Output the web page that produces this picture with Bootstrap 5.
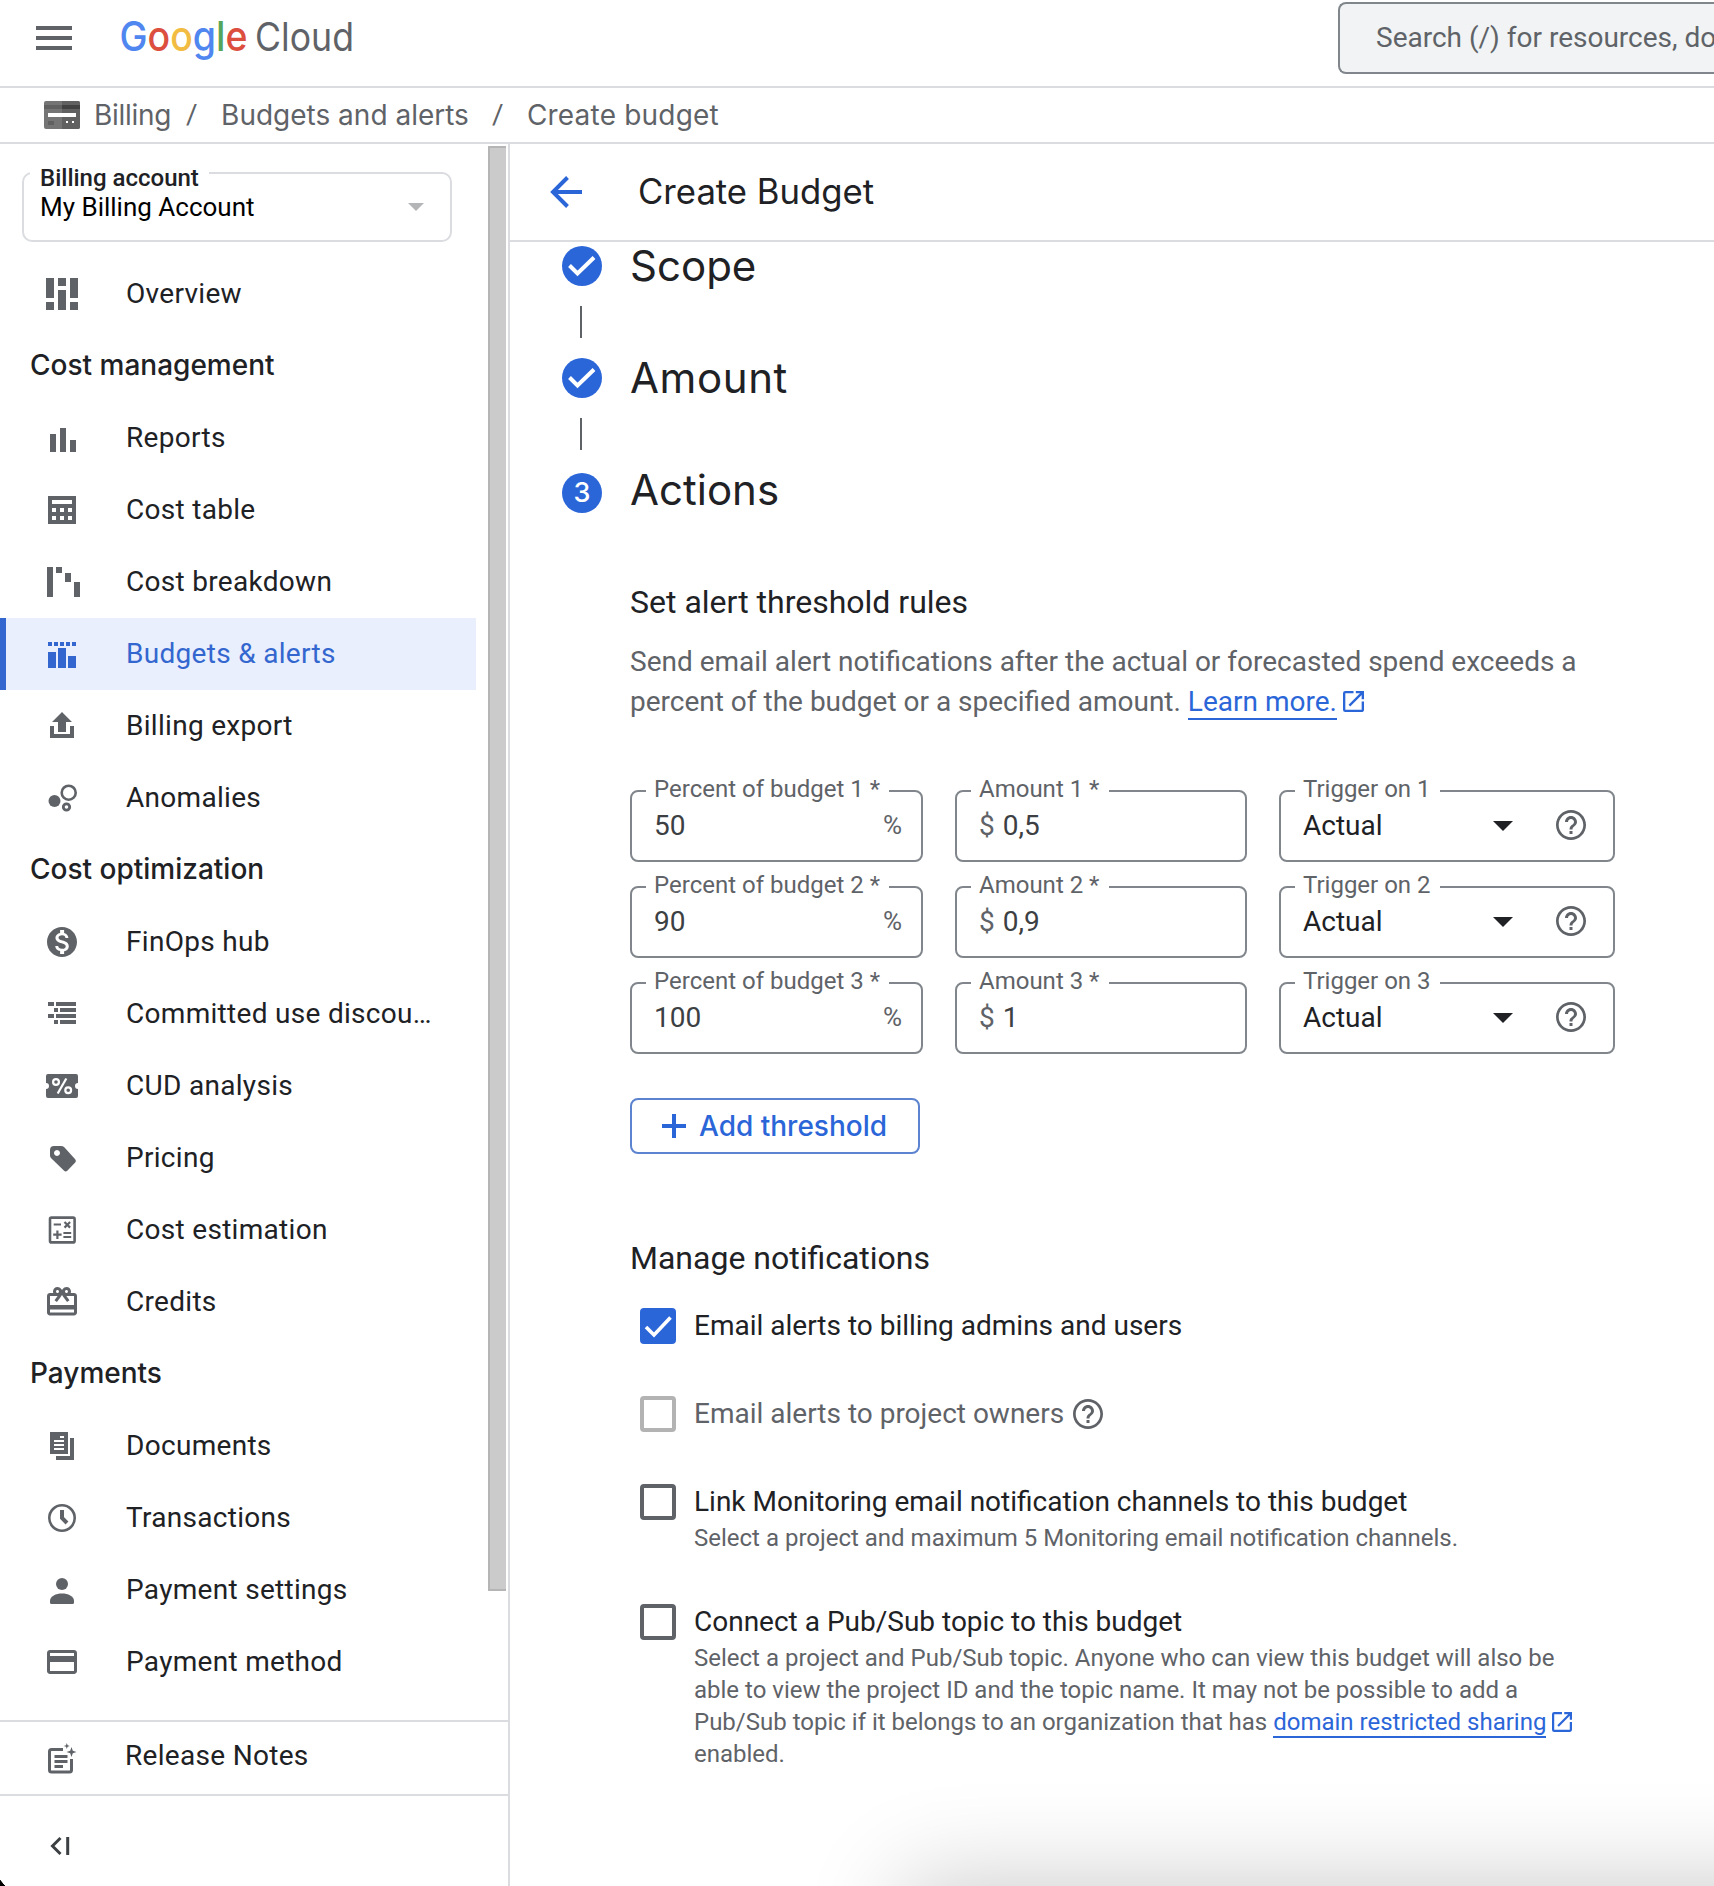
<!DOCTYPE html>
<html lang="en">
<head>
<meta charset="utf-8">
<meta name="viewport" content="width=device-width, initial-scale=1">
<title>Create Budget – Billing – Google Cloud</title>
<link href="https://cdn.jsdelivr.net/npm/bootstrap@5.3.0/dist/css/bootstrap.min.css" rel="stylesheet">
<script src="https://cdn.jsdelivr.net/npm/bootstrap@5.3.0/dist/js/bootstrap.bundle.min.js"></script>
<style>
  :root { --ink:#202124; --soft:#5f6368; --line:#dadce0; --blue:#2b66d9; --outline:#80868b; }
  body { font-family:Roboto, "Liberation Sans", sans-serif; font-size:28px; line-height:40px; color:var(--ink); background:#fff; }
  svg { display:block; flex:none; }
  .app-shell { width:1714px; height:1886px; }
  .g-sans { font-family:Inter, Roboto, sans-serif; }

  /* header */
  .top-bar { height:88px; border-bottom:2px solid var(--line); padding-left:36px; }
  .menu-icon { margin-top:20px; }
  .brand-logo { margin:11px 0 0 40px; }
  .search-box { width:376px; height:72px; margin-top:2px; padding-left:36px; background:#f1f3f4; border:2px solid var(--outline); border-right:0; border-radius:8px 0 0 8px; color:var(--soft); line-height:68px; }
  .crumb-bar { height:56px; border-bottom:2px solid var(--line); padding:0 0 1px 44px; color:var(--soft); }
  .crumb-bar .first-crumb { margin-left:14px; letter-spacing:-.3px; }
  .crumb-bar .slash { width:50px; padding-left:15px; font-family:Roboto; }
  .crumb-bar .slash-b { width:58px; padding-left:23px; font-family:Roboto; }
  .crumb-bar .last-crumb { letter-spacing:.2px; }

  /* sidebar */
  .side-col { width:510px; border-right:2px solid var(--line); }
  .side-scroll { height:1576px; padding:28px 0 0; }
  .acct-box { width:430px; height:70px; margin:0 0 16px 22px; border:2px solid var(--line); border-radius:10px; padding:13px 26px 0 16px; color:#000; font-size:26px; }
  .float-label { position:absolute; background:#fff; white-space:nowrap; }
  .acct-box .float-label { left:6px; top:-12px; padding:0 10px; height:32px; line-height:32px; font-size:24px; font-weight:500; color:var(--ink); background:linear-gradient(#fff 50%, transparent 50%); }
  .scroll-thumb { position:absolute; right:2px; top:2px; width:18px; height:1445px; background:#cbcbcb; border:2px solid #b5b5b5; border-right:0; }
  .nav-row { height:72px; width:476px; padding:0 40px 0 44px; gap:46px; color:var(--ink); letter-spacing:.3px; text-decoration:none; }
  .nav-row.is-active { background:#e9effd; color:#3367cf; border-left:6px solid #3367cf; padding-left:38px; }
  .nav-row svg { color:var(--soft); }
  .nav-row.is-active svg { color:#3367cf; }
  .nav-head { height:72px; padding:0 0 2px 30px; font-weight:500; }
  .release-row { height:74px; width:508px; border-top:2px solid var(--line); padding-bottom:5px; gap:45px; }
  .release-row svg { margin-top:9px; }
  .collapse-row { border-top:2px solid var(--line); padding:40px 0 0 48px; height:92px; }

  /* main */
  .title-bar { height:98px; border-bottom:2px solid var(--line); padding-left:37px; font-size:34.7px; }
  .title-bar span { margin-left:55px; margin-top:-2px; }
  .page-body { padding:4px 0 0 52px; }
  .step-row { height:40px; gap:28px; }
  .step-row h2 { font-size:42px; line-height:44px; margin:-2px 0 0; font-weight:400; }
  .step-row .wide { letter-spacing:.6px; }
  .step-dot { width:40px; height:40px; border-radius:50%; background:var(--blue); color:#fff; font-size:27px; font-weight:500; }
  .step-link { width:2px; height:32px; margin:20px 0 20px 18px; background:var(--soft); }
  .step-body { padding:72px 0 0 68px; }
  .step-body h3 { font-size:32px; line-height:40px; margin:0; font-weight:400; }
  .help-copy { color:var(--soft); width:980px; height:80px; margin:20px 0 68px; }
  .doc-link { color:var(--blue); text-decoration:none; border-bottom:2px solid var(--blue); }
  .help-copy .doc-link { display:inline-block; line-height:33px; }
  .ext-icon { display:inline-block; vertical-align:-1px; margin-left:-1px; color:var(--blue); }

  .rule-grid { gap:24px; }
  .rule-row { gap:32px; }
  .out-field { height:72px; width:292px; border:2px solid var(--outline); border-radius:8px; padding:14px 18px 0 22px; color:#3c4043; line-height:40px; }
  .out-field.pct { width:293px; padding-right:19px; }
  .out-field.trig { width:336px; color:var(--ink); padding-right:27px; }
  .out-field .float-label { left:14px; top:-19px; padding:0 9px 0 8px; height:32px; line-height:32px; font-size:24px; color:var(--soft); }
  .amt .float-label { padding-right:10px; }
  .amt .unit { margin-right:1px; }
  .out-field .unit { color:var(--soft); }
  .out-field .unit-pct { font-size:26px; line-height:38px; }
  .rule-row svg { margin-top:4px; }
  .rule-row .drop-tri { margin:15px 43px 0 0; }
  .add-btn { width:290px; height:56px; margin:44px 0 84px; border:2px solid #5c83cf; border-radius:8px; color:var(--blue); font-weight:500; font-size:28px; line-height:40px; padding:0 0 0 28px; gap:11px; }

  .check-item { gap:18px; margin-left:10px; line-height:36px; }
  .check-square { width:36px; height:36px; border:4px solid var(--soft); border-radius:4px; flex:none; }
  .check-square.is-on { background:var(--blue); border:0; }
  .check-square.is-off { border-color:#b3b3b4; }
  .check-note { font-size:24px; line-height:32px; color:var(--soft); margin-top:2px; width:890px; }
  .check-note .doc-link { display:inline-block; line-height:27px; }
  .check-note .ext-icon { vertical-align:-2px; margin-left:0; }

  /* edges of the window behind */
  .edge-shadow { position:absolute; left:912px; top:1890px; width:1400px; height:300px; box-shadow:0 0 92px 10px rgba(0,0,0,.2); }
  .edge-corner { position:absolute; left:0; bottom:0; width:5px; height:6px; background:linear-gradient(to top right, #000 50%, transparent 56%); }
</style>
</head>
<body class="overflow-hidden">
<svg width="0" height="0" class="position-absolute">
  <symbol id="i-help" viewBox="2 2 20 20"><path fill="currentColor" d="M11 18h2v-2h-2v2zm1-16C6.480 2 2 6.480 2 12s4.480 10 10 10 10-4.480 10-10S17.520 2 12 2zm0 18.200c-4.500 0-8.200-3.700-8.200-8.200S7.500 3.800 12 3.800s8.200 3.700 8.200 8.200-3.700 8.200-8.200 8.200zM12 6c-2.210 0-4 1.790-4 4h2c0-1.100.9-2 2-2s2 .9 2 2c0 2-3 1.750-3 5h2c0-2.250 3-2.500 3-5 0-2.210-1.790-4-4-4z"/></symbol>
  <symbol id="i-ext" viewBox="3 3 18 18"><path fill="currentColor" d="M19 19H5V5h7V3H5a2 2 0 0 0-2 2v14a2 2 0 0 0 2 2h14c1.100 0 2-.9 2-2v-7h-2v7zM14 3v2h3.590l-9.830 9.830 1.410 1.410L19 6.410V10h2V3h-7z"/></symbol>
  <symbol id="i-check" viewBox="0 0 40 40"><path fill="none" stroke="currentColor" stroke-width="4" d="M7.500 19.500 15.500 27.500 32 11.500"/></symbol>
</svg>

<div class="app-shell position-relative overflow-hidden d-flex flex-column">
  <header class="top-bar d-flex align-items-start flex-shrink-0">
    <svg class="menu-icon" width="36" height="36" viewBox="0 0 36 36" fill="#5f6368"><path d="M0 6h36v4H0zM0 16h36v4H0zM0 26h36v4H0z"/></svg>
    <svg class="brand-logo" width="320" height="64" viewBox="0 0 320 64" font-family="Inter, Roboto, sans-serif">
      <text x="7.500" y="39.500" font-size="41" font-weight="500" textLength="128" lengthAdjust="spacingAndGlyphs"><tspan fill="#4f86ef">G</tspan><tspan fill="#dc4f3f">o</tspan><tspan fill="#f2bc42">o</tspan><tspan fill="#4f86ef">g</tspan><tspan fill="#55a55c">l</tspan><tspan fill="#dc4f3f">e</tspan></text>
      <text x="143" y="39.500" font-size="39" fill="#5f6368" textLength="99" lengthAdjust="spacingAndGlyphs">Cloud</text>
    </svg>
    <div class="search-box ms-auto overflow-hidden text-nowrap">Search (/) for resources, docs, products, and more</div>
  </header>

  <nav class="crumb-bar g-sans d-flex align-items-center flex-shrink-0">
    <svg width="36" height="28" viewBox="0 0 36 28"><rect width="36" height="28" rx="2" fill="#757575"/><path d="M18 0h16a2 2 0 0 1 2 2v24a2 2 0 0 1-2 2H18z" fill="#616161"/><path d="M0 4h18v4H0z" fill="#616161"/><path d="M18 4h18v4H18z" fill="#424242"/><path d="M4 12h28v4H4zM22 20h2v2h-2zM28 20h2v2h-2z" fill="#fff"/><path d="M4 20h6v4H4z" fill="#616161"/></svg>
    <span class="first-crumb">Billing</span><span class="slash">/</span><span>Budgets and alerts</span><span class="slash-b">/</span><span class="last-crumb">Create budget</span>
  </nav>

  <div class="d-flex flex-grow-1">
    <aside class="side-col flex-shrink-0 position-relative">
      <div class="side-scroll">
        <div class="acct-box position-relative d-flex justify-content-between align-items-start">
          <span class="float-label">Billing account</span>
          <span>My Billing Account</span>
          <svg class="mt-3" width="16" height="8" viewBox="0 0 16 8"><path d="M0 0h16L8 8z" fill="#b4b5b7"/></svg>
        </div>
        <a class="nav-row d-flex align-items-center"><svg width="36" height="36" fill="currentColor"><path d="M2 2h8v20H2zM2 26h8v8H2zM14 2h8v8h-8zM14 14h8v20h-8zM26 2h8v20h-8zM26 26h8v8h-8z"/></svg><span>Overview</span></a>
        <div class="nav-head g-sans d-flex align-items-center">Cost management</div>
        <a class="nav-row d-flex align-items-center"><svg width="36" height="36" fill="currentColor"><path d="M6 14h6v18H6zM16 8h6v24h-6zM26 20h6v12h-6z"/></svg><span>Reports</span></a>
        <a class="nav-row d-flex align-items-center"><svg width="36" height="36" fill="currentColor"><path fill-rule="evenodd" d="M4 4h28v28H4zM8 8v4h20V8zM8 16v4h4v-4zM16 16v4h4v-4zM24 16v4h4v-4zM8 24v4h4v-4zM16 24v4h4v-4zM24 24v4h4v-4z"/></svg><span>Cost table</span></a>
        <a class="nav-row d-flex align-items-center"><svg width="36" height="36" fill="currentColor"><path d="M3 3h6v30H3zM12 3h6v6h-6zM21 9h6v9h-6zM30 18h6v15h-6z"/></svg><span>Cost breakdown</span></a>
        <a class="nav-row is-active d-flex align-items-center"><svg width="36" height="36" fill="currentColor"><path d="M4 6h4v4H4zM10 6h4v4h-4zM16 6h4v4h-4zM22 6h4v4h-4zM28 6h4v4h-4zM4 16h8v16H4zM14 12h8v20h-8zM24 20h8v12h-8z"/></svg><span>Budgets &amp; alerts</span></a>
        <a class="nav-row d-flex align-items-center"><svg width="36" height="36" fill="currentColor"><path d="M18 4 28 14h-6v10h-8V14H8zM6 18h4v8h16v-8h4v12H6z"/></svg><span>Billing export</span></a>
        <a class="nav-row d-flex align-items-center"><svg width="36" height="36" fill="currentColor"><circle cx="10.500" cy="21" r="6"/><circle cx="24.700" cy="12.700" r="7" fill="none" stroke="currentColor" stroke-width="2.600"/><circle cx="22.500" cy="27" r="3.200" fill="none" stroke="currentColor" stroke-width="2.800"/></svg><span>Anomalies</span></a>
        <div class="nav-head g-sans d-flex align-items-center">Cost optimization</div>
        <a class="nav-row d-flex align-items-center"><svg width="36" height="36" viewBox="0 0 24 24" fill="currentColor"><path d="M12 2C6.480 2 2 6.480 2 12s4.480 10 10 10 10-4.480 10-10S17.520 2 12 2zm1.410 16.090V20h-2.670v-1.930c-1.710-.36-3.160-1.460-3.270-3.400h1.960c.1 1.050.82 1.870 2.650 1.870 1.960 0 2.400-.98 2.400-1.590 0-.83-.44-1.610-2.670-2.140-2.480-.6-4.180-1.620-4.180-3.670 0-1.720 1.390-2.840 3.110-3.210V4h2.670v1.950c1.860.45 2.790 1.860 2.850 3.390H14.300c-.05-1.110-.64-1.870-2.220-1.870-1.500 0-2.400.68-2.400 1.640 0 .84.65 1.390 2.670 1.910s4.180 1.390 4.180 3.910c-.02 1.830-1.380 2.830-3.120 3.160z"/></svg><span>FinOps hub</span></a>
        <a class="nav-row d-flex align-items-center"><svg width="36" height="36" fill="currentColor"><path d="M4 6h6v4H4zM12 6h20v4H12zM10 12h4v4h-4zM16 12h16v4H16zM4 18h6v4H4zM12 18h20v4H12zM10 24h4v4h-4zM16 24h16v4H16z"/></svg><span>Committed use discou…</span></a>
        <a class="nav-row d-flex align-items-center"><svg width="36" height="36"><path fill="currentColor" d="M4 6h28a2 2 0 0 1 2 2v7a3 3 0 0 0 0 6v7a2 2 0 0 1-2 2H4a2 2 0 0 1-2-2v-7a3 3 0 0 0 0-6V8a2 2 0 0 1 2-2z"/><g fill="none" stroke="#fff" stroke-width="2.200"><circle cx="12" cy="14" r="2.900"/><circle cx="24.200" cy="22.200" r="2.900"/><path d="M22.300 10.500 13.700 25.500"/></g></svg><span>CUD analysis</span></a>
        <a class="nav-row d-flex align-items-center"><svg width="36" height="36" fill="currentColor"><path fill-rule="evenodd" d="M10 6h7q2 0 3.300 1.200L31.200 19.300q1.500 1.700 0 3.200l-7.900 8.300q-1.700 1.500-3.200 0L7.200 18.300Q6 17 6 15.500V10q0-4 4-4zM13 10a3 3 0 1 0 .01 0z"/></svg><span>Pricing</span></a>
        <a class="nav-row d-flex align-items-center"><svg width="36" height="36" fill="none" stroke="currentColor" stroke-width="2.600"><rect x="6" y="5.600" width="24.600" height="24.800" rx="1.500"/><path stroke-width="2.200" d="M9.700 12.500H17M20.500 10l5.600 5.600M26.100 10l-5.600 5.600M9.200 22.700h8.400M13.400 18.500v8.400M19.400 21h7.800M19.400 25h7.800"/></svg><span>Cost estimation</span></a>
        <a class="nav-row d-flex align-items-center"><svg width="36" height="36" viewBox="0 0 24 24" fill="currentColor"><path d="M20 6h-2.180c.11-.31.18-.65.18-1 0-1.660-1.340-3-3-3-1.050 0-1.960.54-2.500 1.350l-.5.67-.5-.68C10.960 2.540 10.050 2 9 2 7.340 2 6 3.340 6 5c0 .35.07.69.18 1H4c-1.110 0-1.990.89-1.990 2L2 19c0 1.110.89 2 2 2h16c1.110 0 2-.89 2-2V8c0-1.110-.89-2-2-2zm-5-2c.55 0 1 .45 1 1s-.45 1-1 1-1-.45-1-1 .45-1 1-1zM9 4c.55 0 1 .45 1 1s-.45 1-1 1-1-.45-1-1 .45-1 1-1zm11 15H4v-2h16v2zm0-5H4V8h5.080L7 10.830 8.620 12 11 8.760l1-1.360 1 1.360L15.380 12 17 10.830 14.920 8H20v6z"/></svg><span>Credits</span></a>
        <div class="nav-head g-sans d-flex align-items-center">Payments</div>
        <a class="nav-row d-flex align-items-center"><svg width="36" height="36" fill="currentColor"><path fill-rule="evenodd" d="M6 4h18v22H6zM16 8v2h4V8zM10 12v2h10v-2zM10 16v2h10v-2zM10 20v2h10v-2z"/><path d="M26 10h4v22H12v-4h14z"/></svg><span>Documents</span></a>
        <a class="nav-row d-flex align-items-center"><svg width="36" height="36" fill="none" stroke="currentColor"><circle cx="18" cy="18" r="12.700" stroke-width="2.600"/><path stroke-width="4" d="M18 10v8l5 5"/></svg><span>Transactions</span></a>
        <a class="nav-row d-flex align-items-center"><svg width="36" height="36" fill="currentColor"><circle cx="18" cy="12" r="6"/><path d="M6 29c0-5 6-7.500 12-7.500S30 24 30 29v1.500q0 1.500-1.500 1.500h-21Q6 32 6 30.500z"/></svg><span>Payment settings</span></a>
        <a class="nav-row d-flex align-items-center"><svg width="36" height="36" viewBox="0 0 24 24" fill="currentColor"><path d="M20 4H4c-1.110 0-1.990.89-1.990 2L2 18c0 1.110.89 2 2 2h16c1.110 0 2-.89 2-2V6c0-1.110-.89-2-2-2zm0 14H4v-6h16v6zm0-10H4V6h16v2z"/></svg><span>Payment method</span></a>
        <div class="scroll-thumb"></div>
      </div>
      <a class="nav-row release-row d-flex align-items-center"><svg width="36" height="36" fill="currentColor"><path fill="none" stroke="currentColor" stroke-width="3" d="M19 7.500H7.500Q5.500 7.500 5.500 9.500v18.500q0 2 2 2H25.500q2 0 2-2V17"/><path d="M10.500 13h13v3h-13zM10.500 18h13v3h-13zM10.500 23h8.500v3h-8.500zM27.500 5l1.300 3.700L32.500 10l-3.700 1.300L27.500 15l-1.300-3.700L22.500 10l3.700-1.300zM22.800 1l.8 2.200 2.200.8-2.200.8-.8 2.200-.8-2.200-2.200-.8 2.200-.8z"/></svg><span>Release Notes</span></a>
      <div class="collapse-row"><svg width="24" height="20" fill="none" stroke="#3c4043" stroke-width="3"><path d="M12.500 2 4.500 10l8 8M19.700 1v18"/></svg></div>
    </aside>

    <main class="flex-grow-1">
      <div class="title-bar g-sans d-flex align-items-center">
        <svg width="36" height="36" viewBox="0 0 36 36" fill="none" stroke="#2b66d9" stroke-width="4"><path d="M35 18H6M20.500 3.500 6 18 20.500 32.500"/></svg>
        <span>Create Budget</span>
      </div>
      <div class="page-body">
        <div class="step-row d-flex"><div class="step-dot"><svg width="40" height="40"><use href="#i-check"/></svg></div><h2 class="g-sans">Scope</h2></div>
        <div class="step-link"></div>
        <div class="step-row d-flex"><div class="step-dot"><svg width="40" height="40"><use href="#i-check"/></svg></div><h2 class="g-sans wide">Amount</h2></div>
        <div class="step-link"></div>
        <div class="step-row d-flex"><div class="step-dot g-sans text-center" style="margin-top:3px">3</div><h2 class="g-sans">Actions</h2></div>

        <div class="step-body">
          <h3>Set alert threshold rules</h3>
          <p class="help-copy">Send email alert notifications after the actual or forecasted spend exceeds a<br>percent of the budget or a specified amount. <a class="doc-link">Learn more.</a> <svg class="ext-icon" width="21" height="21"><use href="#i-ext"/></svg></p>

          <div class="rule-grid d-flex flex-column">
            <div class="rule-row d-flex">
              <div class="out-field pct position-relative d-flex justify-content-between"><span class="float-label">Percent of budget 1 *</span><span>50</span><span class="unit unit-pct">%</span></div>
              <div class="out-field amt position-relative"><span class="float-label">Amount 1 *</span><span class="unit">$</span> 0,5</div>
              <div class="out-field trig position-relative d-flex align-items-start"><span class="float-label">Trigger on 1</span><span class="me-auto">Actual</span><svg class="drop-tri" width="20" height="10"><path d="M0 0h20L10 10z" fill="#202124"/></svg><svg width="30" height="30" color="#5f6368"><use href="#i-help"/></svg></div>
            </div>
            <div class="rule-row d-flex">
              <div class="out-field pct position-relative d-flex justify-content-between"><span class="float-label">Percent of budget 2 *</span><span>90</span><span class="unit unit-pct">%</span></div>
              <div class="out-field amt position-relative"><span class="float-label">Amount 2 *</span><span class="unit">$</span> 0,9</div>
              <div class="out-field trig position-relative d-flex align-items-start"><span class="float-label">Trigger on 2</span><span class="me-auto">Actual</span><svg class="drop-tri" width="20" height="10"><path d="M0 0h20L10 10z" fill="#202124"/></svg><svg width="30" height="30" color="#5f6368"><use href="#i-help"/></svg></div>
            </div>
            <div class="rule-row d-flex">
              <div class="out-field pct position-relative d-flex justify-content-between"><span class="float-label">Percent of budget 3 *</span><span>100</span><span class="unit unit-pct">%</span></div>
              <div class="out-field amt position-relative"><span class="float-label">Amount 3 *</span><span class="unit">$</span> 1</div>
              <div class="out-field trig position-relative d-flex align-items-start"><span class="float-label">Trigger on 3</span><span class="me-auto">Actual</span><svg class="drop-tri" width="20" height="10"><path d="M0 0h20L10 10z" fill="#202124"/></svg><svg width="30" height="30" color="#5f6368"><use href="#i-help"/></svg></div>
            </div>
          </div>

          <button type="button" class="btn add-btn g-sans d-flex align-items-center"><svg width="28" height="26" viewBox="0 0 28 26"><path d="M2 13h24M14 1v24" stroke="#2b66d9" stroke-width="4"/></svg>Add threshold</button>

          <h3>Manage notifications</h3>
          <div class="check-item d-flex" style="margin-top:30px"><span class="check-square is-on"><svg width="36" height="36" viewBox="0 0 36 36"><path d="M6 19l8 8L30.500 9.500" fill="none" stroke="#fff" stroke-width="3.600"/></svg></span><span>Email alerts to billing admins and users</span></div>
          <div class="check-item d-flex" style="margin-top:52px"><span class="check-square is-off"></span><span class="text-nowrap d-flex" style="color:#5f6368">Email alerts to project owners <svg width="30" height="30" style="margin:3px 0 0 9px"><use href="#i-help"/></svg></span></div>
          <div class="check-item d-flex" style="margin-top:52px"><span class="check-square"></span><div>Link Monitoring email notification channels to this budget<div class="check-note">Select a project and maximum 5 Monitoring email notification channels.</div></div></div>
          <div class="check-item d-flex" style="margin-top:50px"><span class="check-square"></span><div>Connect a Pub/Sub topic to this budget<div class="check-note">Select a project and Pub/Sub topic. Anyone who can view this budget will also be<br>able to view the project ID and the topic name. It may not be possible to add a<br>Pub/Sub topic if it belongs to an organization that has <a class="doc-link">domain restricted sharing</a> <svg class="ext-icon" width="20" height="20"><use href="#i-ext"/></svg><br>enabled.</div></div></div>
        </div>
      </div>
    </main>
  </div>
  <div class="edge-shadow"></div>
  <div class="edge-corner"></div>
</div>
</body>
</html>
